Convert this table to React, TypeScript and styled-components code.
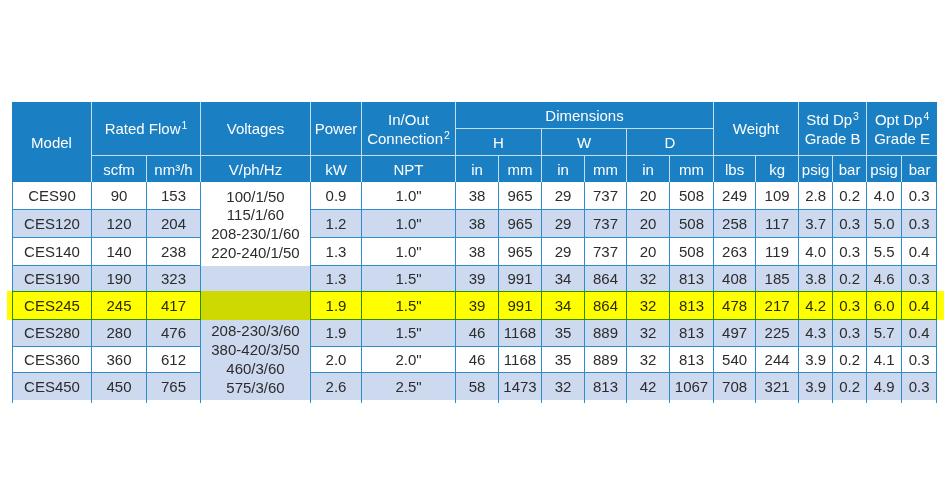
import React from 'react';
import styled, { createGlobalStyle } from 'styled-components';

const BLUE = '#1b7fc3';
const LINE = '#2f8cca';
const STRIPE = '#cdd9ee';
const INK = '#2c2c2c';
const HEAD_LINE = 'rgba(255,255,255,0.75)';

const GlobalStyle = createGlobalStyle`
  html, body { margin: 0; padding: 0; background: #ffffff; }
  body { font-family: "Liberation Sans", Arial, sans-serif; }
`;

const Page = styled.div`
  width: 949px;
  height: 500px;
  box-sizing: border-box;
  padding: 102px 0 0 12px;
`;

const Table = styled.table`
  border-collapse: separate;
  border-spacing: 0;
  table-layout: fixed;
  width: 925px;
  font-size: 15px;
`;

const Row = styled.tr<{ $h: number }>`
  height: ${(p) => p.$h}px;
`;

const HeadCell = styled.th<{ $last?: boolean; $rule?: boolean }>`
  background: ${BLUE};
  color: #ffffff;
  font-weight: normal;
  text-align: center;
  vertical-align: middle;
  padding: 0;
  line-height: 19px;
  white-space: nowrap;
  border-right: ${(p) => (p.$last ? 'none' : `1px solid ${HEAD_LINE}`)};
  border-bottom: ${(p) => (p.$rule ? `1px solid ${HEAD_LINE}` : 'none')};
`;

const Sup = styled.span`
  font-size: 10.5px;
  line-height: 0;
  vertical-align: 5px;
  margin-left: 1px;
`;

const Cell = styled.td<{ $bg: string; $first?: boolean; $lastRow?: boolean }>`
  background: ${(p) => p.$bg};
  color: ${INK};
  text-align: center;
  vertical-align: middle;
  padding: 0;
  line-height: 18px;
  white-space: nowrap;
  border-right: 1px solid ${LINE};
  border-left: ${(p) => (p.$first ? `1px solid ${LINE}` : 'none')};
  border-bottom: ${(p) => (p.$lastRow ? 'none' : `1px solid ${LINE}`)};
`;

const HighlightCell = styled(Cell)`
  position: relative;
  &::after {
    content: '';
    position: absolute;
    left: -6px;
    top: -1px;
    bottom: -1px;
    width: 937px;
    background: #ffff00;
    mix-blend-mode: multiply;
    pointer-events: none;
    filter: blur(0.4px);
  }
`;

const VoltCell = styled(Cell)<{ $align: 'middle' | 'bottom' }>`
  vertical-align: ${(p) => p.$align};
  line-height: ${(p) => (p.$align === 'middle' ? '18.6px' : '19px')};
  padding-bottom: ${(p) => (p.$align === 'bottom' ? '3px' : '0')};
  padding-top: ${(p) => (p.$align === 'middle' ? '2px' : '0')};
  border-bottom: none;
`;

const TickRow = styled.tr`
  height: 3px;
`;

const Tick = styled.td<{ $first?: boolean }>`
  padding: 0;
  font-size: 0;
  line-height: 0;
  border-right: 1px solid ${LINE};
  border-left: ${(p) => (p.$first ? `1px solid ${LINE}` : 'none')};
`;

const widths = [80, 55, 54, 110, 51, 94, 43, 43, 43, 42, 43, 44, 42, 43, 34, 34, 35, 35];

type DataRow = { model: string; flow: string[]; rest: string[]; h: number };

const data: DataRow[] = [
  { model: 'CES90', flow: ['90', '153'], rest: ['0.9', '1.0"', '38', '965', '29', '737', '20', '508', '249', '109', '2.8', '0.2', '4.0', '0.3'], h: 28 },
  { model: 'CES120', flow: ['120', '204'], rest: ['1.2', '1.0"', '38', '965', '29', '737', '20', '508', '258', '117', '3.7', '0.3', '5.0', '0.3'], h: 28 },
  { model: 'CES140', flow: ['140', '238'], rest: ['1.3', '1.0"', '38', '965', '29', '737', '20', '508', '263', '119', '4.0', '0.3', '5.5', '0.4'], h: 28 },
  { model: 'CES190', flow: ['190', '323'], rest: ['1.3', '1.5"', '39', '991', '34', '864', '32', '813', '408', '185', '3.8', '0.2', '4.6', '0.3'], h: 26 },
  { model: 'CES245', flow: ['245', '417'], rest: ['1.9', '1.5"', '39', '991', '34', '864', '32', '813', '478', '217', '4.2', '0.3', '6.0', '0.4'], h: 28 },
  { model: 'CES280', flow: ['280', '476'], rest: ['1.9', '1.5"', '46', '1168', '35', '889', '32', '813', '497', '225', '4.3', '0.3', '5.7', '0.4'], h: 27 },
  { model: 'CES360', flow: ['360', '612'], rest: ['2.0', '2.0"', '46', '1168', '35', '889', '32', '813', '540', '244', '3.9', '0.2', '4.1', '0.3'], h: 26 },
  { model: 'CES450', flow: ['450', '765'], rest: ['2.6', '2.5"', '58', '1473', '32', '813', '42', '1067', '708', '321', '3.9', '0.2', '4.9', '0.3'], h: 27 },
];

const singlePhase = ['100/1/50', '115/1/60', '208-230/1/60', '220-240/1/50'];
const threePhase = ['208-230/3/60', '380-420/3/50', '460/3/60', '575/3/60'];
const HIGHLIGHT = 'CES245';

const Lines: React.FC<{ items: string[] }> = ({ items }) => (
  <>
    {items.map((t, i) => (
      <React.Fragment key={t}>
        {i > 0 && <br />}
        {t}
      </React.Fragment>
    ))}
  </>
);

const subHeads = ['scfm', 'nm³/h', 'V/ph/Hz', 'kW', 'NPT', 'in', 'mm', 'in', 'mm', 'in', 'mm', 'lbs', 'kg', 'psig', 'bar', 'psig', 'bar'];

export default function App() {
  return (
    <Page>
      <GlobalStyle />
      <Table>
        <colgroup>
          {widths.map((w, i) => (
            <col key={i} style={{ width: w }} />
          ))}
        </colgroup>
        <thead>
          <Row $h={27}>
            <HeadCell rowSpan={3}>Model</HeadCell>
            <HeadCell colSpan={2} rowSpan={2} $rule>
              Rated Flow<Sup>1</Sup>
            </HeadCell>
            <HeadCell rowSpan={2} $rule>Voltages</HeadCell>
            <HeadCell rowSpan={2} $rule>Power</HeadCell>
            <HeadCell rowSpan={2} $rule>
              In/Out
              <br />
              Connection<Sup>2</Sup>
            </HeadCell>
            <HeadCell colSpan={6} $rule>Dimensions</HeadCell>
            <HeadCell colSpan={2} rowSpan={2} $rule>Weight</HeadCell>
            <HeadCell colSpan={2} rowSpan={2} $rule>
              Std Dp<Sup>3</Sup>
              <br />
              Grade B
            </HeadCell>
            <HeadCell colSpan={2} rowSpan={2} $rule $last>
              Opt Dp<Sup>4</Sup>
              <br />
              Grade E
            </HeadCell>
          </Row>
          <Row $h={27}>
            <HeadCell colSpan={2} $rule>H</HeadCell>
            <HeadCell colSpan={2} $rule>W</HeadCell>
            <HeadCell colSpan={2} $rule>D</HeadCell>
          </Row>
          <Row $h={26}>
            {subHeads.map((s, i) => (
              <HeadCell key={i} $last={i === subHeads.length - 1}>
                {s}
              </HeadCell>
            ))}
          </Row>
        </thead>
        <tbody>
          {data.map((r, idx) => {
            const bg = idx % 2 === 0 ? '#ffffff' : STRIPE;
            const lastRow = idx === data.length - 1;
            const First = r.model === HIGHLIGHT ? HighlightCell : Cell;
            return (
              <Row key={r.model} $h={r.h}>
                <First $bg={bg} $first $lastRow={lastRow}>
                  {r.model}
                </First>
                {r.flow.map((v, i) => (
                  <Cell key={`f${i}`} $bg={bg} $lastRow={lastRow}>
                    {v}
                  </Cell>
                ))}
                {idx === 0 && (
                  <VoltCell rowSpan={3} $bg="#ffffff" $align="middle">
                    <Lines items={singlePhase} />
                  </VoltCell>
                )}
                {idx === 3 && (
                  <VoltCell rowSpan={5} $bg={STRIPE} $align="bottom">
                    <Lines items={threePhase} />
                  </VoltCell>
                )}
                {r.rest.map((v, i) => (
                  <Cell key={`r${i}`} $bg={bg} $lastRow={lastRow}>
                    {v}
                  </Cell>
                ))}
              </Row>
            );
          })}
          <TickRow>
            {widths.map((_, i) => (
              <Tick key={i} $first={i === 0} />
            ))}
          </TickRow>
        </tbody>
      </Table>
    </Page>
  );
}
